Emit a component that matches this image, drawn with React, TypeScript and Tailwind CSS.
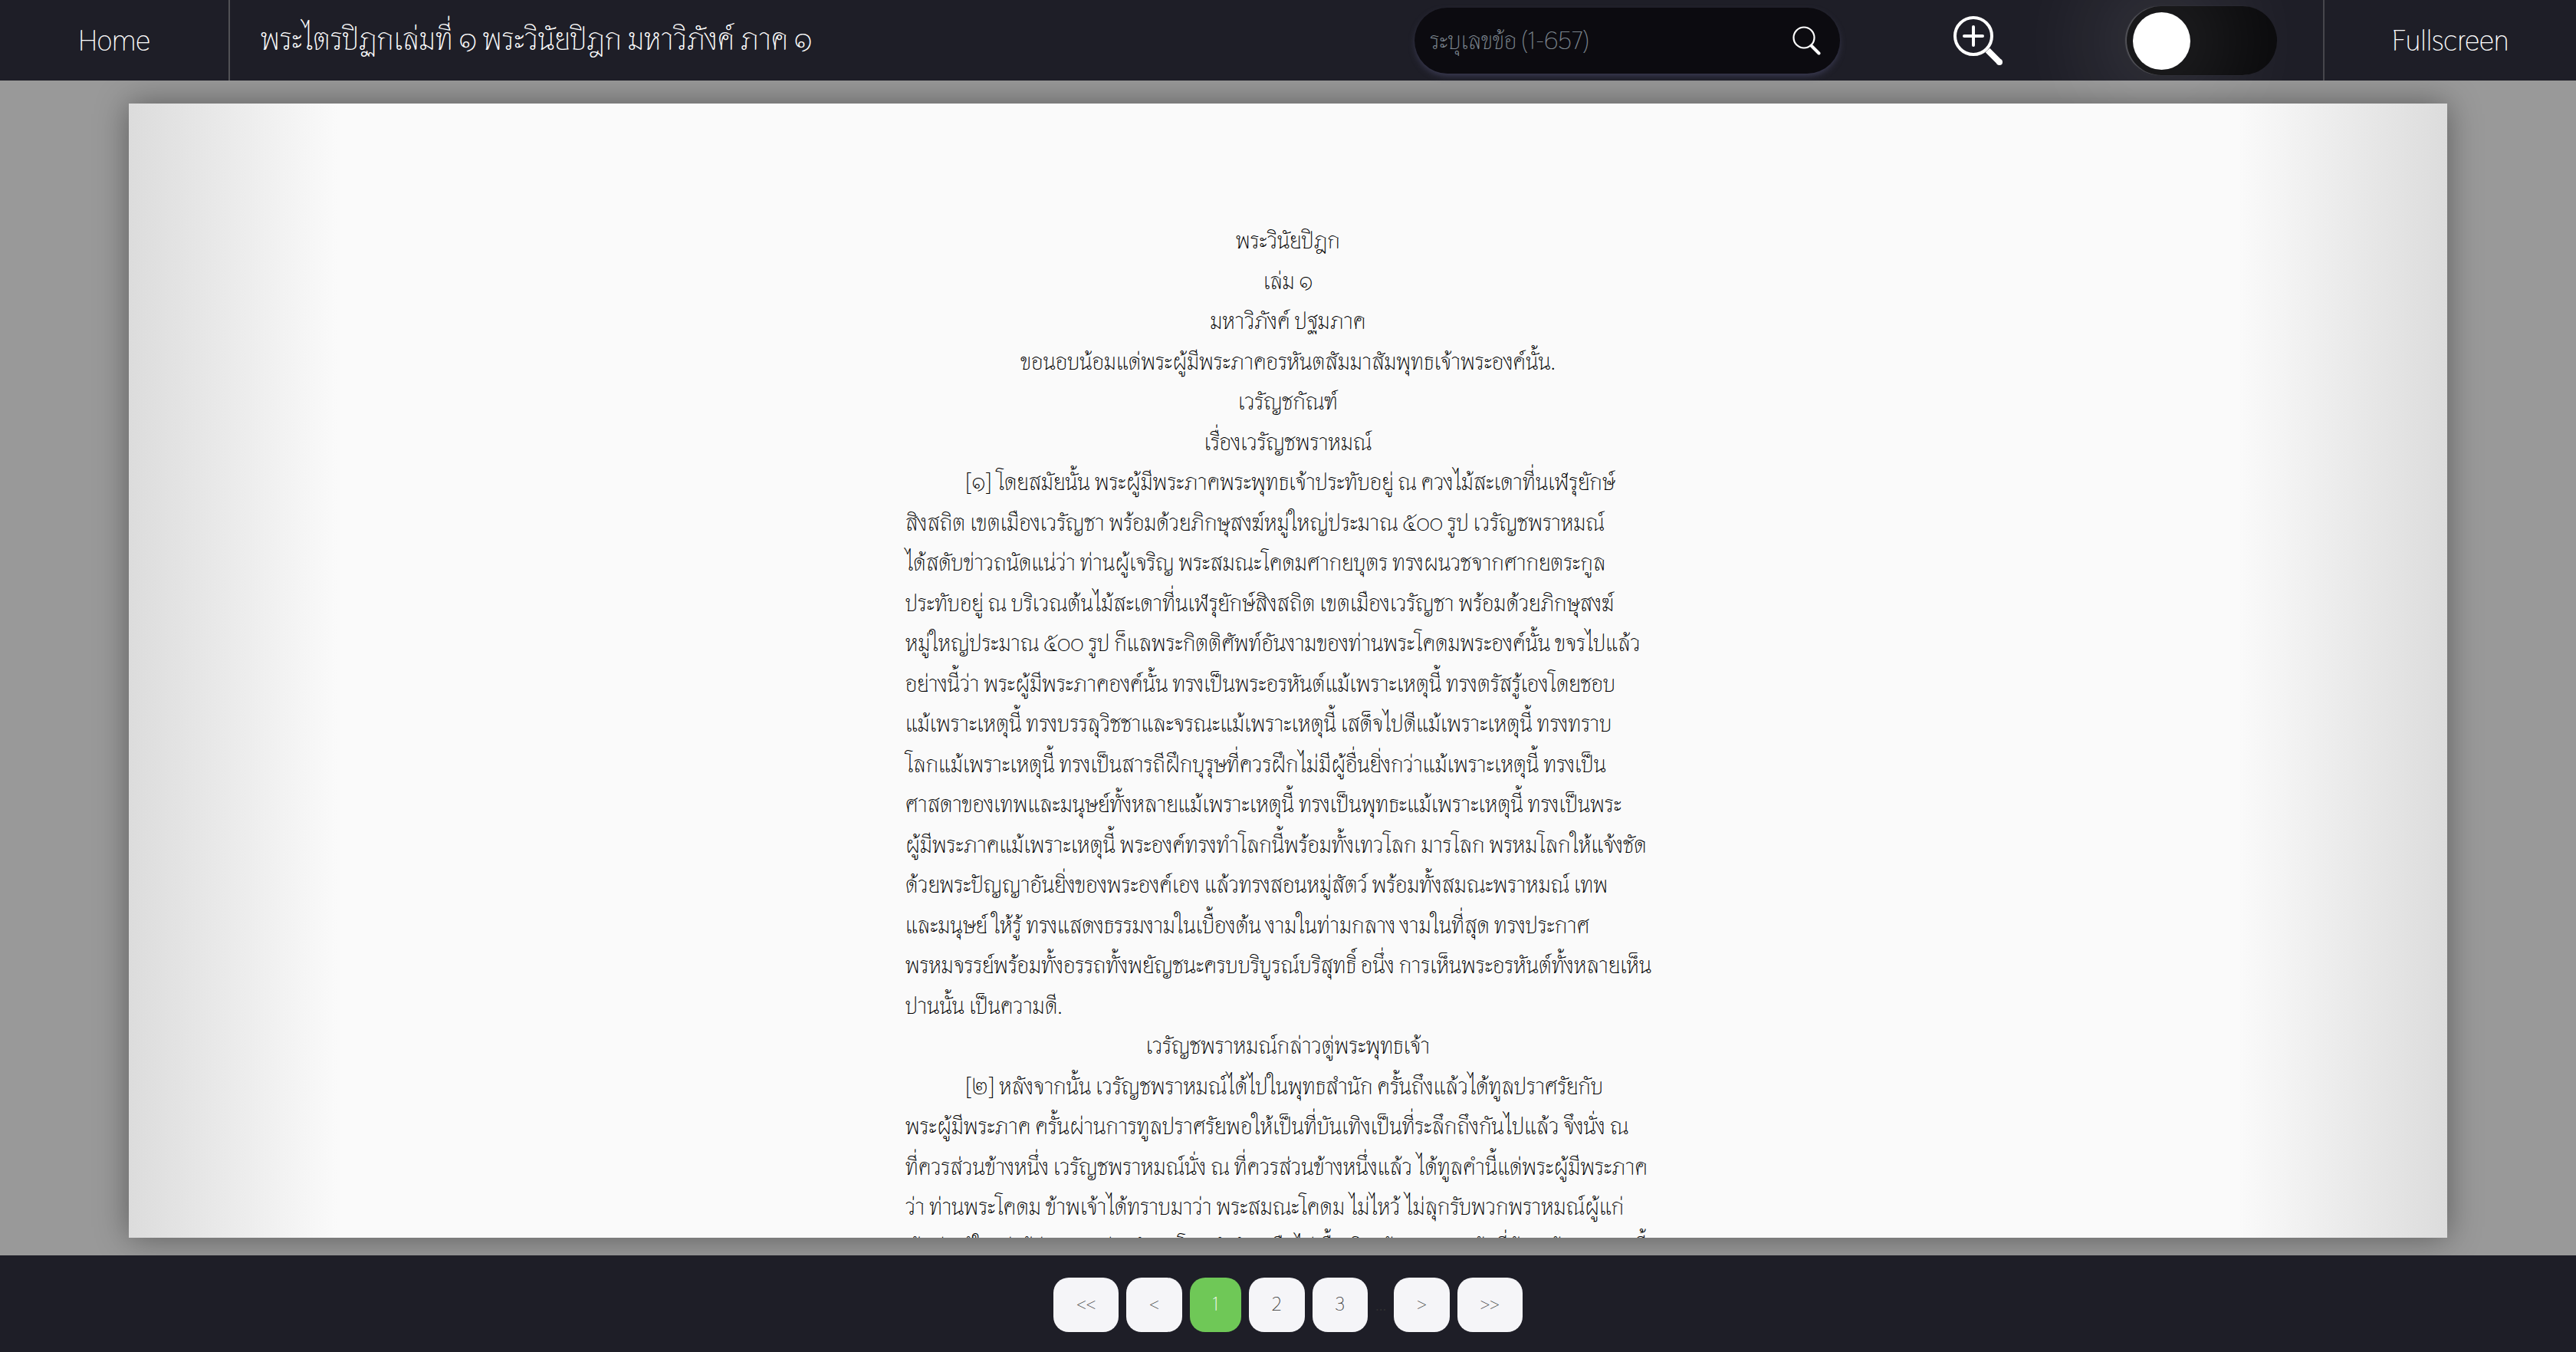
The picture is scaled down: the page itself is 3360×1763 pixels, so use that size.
type Section = { kind: 'heading' | 'paragraph'; lines: string[] };

const sections: Section[] = [
  {
    kind: 'heading',
    lines: [
      'พระวินัยปิฎก',
      'เล่ม ๑',
      'มหาวิภังค์ ปฐมภาค',
      'ขอนอบน้อมแด่พระผู้มีพระภาคอรหันตสัมมาสัมพุทธเจ้าพระองค์นั้น.',
      'เวรัญชกัณฑ์',
      'เรื่องเวรัญชพราหมณ์',
    ],
  },
  {
    kind: 'paragraph',
    lines: [
      '[๑] โดยสมัยนั้น พระผู้มีพระภาคพระพุทธเจ้าประทับอยู่ ณ ควงไม้สะเดาที่นเฬรุยักษ์',
      'สิงสถิต เขตเมืองเวรัญชา พร้อมด้วยภิกษุสงฆ์หมู่ใหญ่ประมาณ ๕๐๐ รูป เวรัญชพราหมณ์',
      'ได้สดับข่าวถนัดแน่ว่า ท่านผู้เจริญ พระสมณะโคดมศากยบุตร ทรงผนวชจากศากยตระกูล',
      'ประทับอยู่ ณ บริเวณต้นไม้สะเดาที่นเฬรุยักษ์สิงสถิต เขตเมืองเวรัญชา พร้อมด้วยภิกษุสงฆ์',
      'หมู่ใหญ่ประมาณ ๕๐๐ รูป ก็แลพระกิตติศัพท์อันงามของท่านพระโคดมพระองค์นั้น ขจรไปแล้ว',
      'อย่างนี้ว่า พระผู้มีพระภาคองค์นั้น ทรงเป็นพระอรหันต์แม้เพราะเหตุนี้ ทรงตรัสรู้เองโดยชอบ',
      'แม้เพราะเหตุนี้ ทรงบรรลุวิชชาและจรณะแม้เพราะเหตุนี้ เสด็จไปดีแม้เพราะเหตุนี้ ทรงทราบ',
      'โลกแม้เพราะเหตุนี้ ทรงเป็นสารถีฝึกบุรุษที่ควรฝึกไม่มีผู้อื่นยิ่งกว่าแม้เพราะเหตุนี้ ทรงเป็น',
      'ศาสดาของเทพและมนุษย์ทั้งหลายแม้เพราะเหตุนี้ ทรงเป็นพุทธะแม้เพราะเหตุนี้ ทรงเป็นพระ',
      'ผู้มีพระภาคแม้เพราะเหตุนี้ พระองค์ทรงทำโลกนี้พร้อมทั้งเทวโลก มารโลก พรหมโลกให้แจ้งชัด',
      'ด้วยพระปัญญาอันยิ่งของพระองค์เอง แล้วทรงสอนหมู่สัตว์ พร้อมทั้งสมณะพราหมณ์ เทพ',
      'และมนุษย์ ให้รู้ ทรงแสดงธรรมงามในเบื้องต้น งามในท่ามกลาง งามในที่สุด ทรงประกาศ',
      'พรหมจรรย์พร้อมทั้งอรรถทั้งพยัญชนะครบบริบูรณ์บริสุทธิ์ อนึ่ง การเห็นพระอรหันต์ทั้งหลายเห็น',
      'ปานนั้น เป็นความดี.',
    ],
  },
  { kind: 'heading', lines: ['เวรัญชพราหมณ์กล่าวตู่พระพุทธเจ้า'] },
  {
    kind: 'paragraph',
    lines: [
      '[๒] หลังจากนั้น เวรัญชพราหมณ์ได้ไปในพุทธสำนัก ครั้นถึงแล้วได้ทูลปราศรัยกับ',
      'พระผู้มีพระภาค ครั้นผ่านการทูลปราศรัยพอให้เป็นที่บันเทิงเป็นที่ระลึกถึงกันไปแล้ว จึงนั่ง ณ',
      'ที่ควรส่วนข้างหนึ่ง เวรัญชพราหมณ์นั่ง ณ ที่ควรส่วนข้างหนึ่งแล้ว ได้ทูลคำนี้แด่พระผู้มีพระภาค',
      'ว่า ท่านพระโคดม ข้าพเจ้าได้ทราบมาว่า พระสมณะโคดม ไม่ไหว้ ไม่ลุกรับพวกพราหมณ์ผู้แก่',
      'ผู้เฒ่า ผู้ใหญ่ ผู้ล่วงกาลผ่านวัยมาโดยลำดับ หรือไม่เชื้อเชิญด้วยอาสนะ ข้อที่ข้าพเจ้าทราบมานี้',
    ],
  },
];

const pages = ['<<', '<', '1', '2', '3', '...', '>', '>>'];

function SearchIcon() {
  return (
    <svg viewBox="0 0 38 38" className="size-[38px]" fill="none" stroke="white" aria-hidden="true">
      <circle cx="15" cy="15" r="13.500" strokeWidth="2.200" />
      <path d="M24.500 25.500L34.500 35.500" strokeWidth="4" strokeLinecap="round" />
    </svg>
  );
}

function ZoomInIcon() {
  return (
    <svg viewBox="0 0 64 64" className="size-16" fill="none" stroke="white" strokeLinecap="round" aria-hidden="true">
      <circle cx="26" cy="26" r="24" strokeWidth="4" />
      <path d="M26 14v24M14 26h24" strokeWidth="4" />
      <path d="M44.500 44.500L60 60" strokeWidth="8" strokeLinecap="butt" />
      <circle cx="60" cy="60" r="4" fill="white" stroke="none" />
    </svg>
  );
}

function Header() {
  return (
    <header className="relative z-10 flex h-[105px] shrink-0 items-stretch bg-[#1e1e27] text-white">
      <a href="#home" className="flex w-[300px] items-center justify-center border-r-2 border-[#515155] text-[38px]">
        Home
      </a>
      <h1 className="flex items-center pb-1 pl-10 text-[40px] whitespace-nowrap">
        พระไตรปิฏกเล่มที่ ๑ พระวินัยปิฎก มหาวิภังค์ ภาค ๑
      </h1>
      <form className="my-[10px] ml-auto flex h-[86px] w-[555px] items-center rounded-full bg-[#0c0b10] pr-[24px] pl-5 shadow-[0_4px_10px_-2px_#41415c]">
        <input
          type="text"
          aria-label="ระบุเลขข้อ"
          placeholder="ระบุเลขข้อ (1-657)"
          className="min-w-0 flex-1 bg-transparent text-[32px] outline-none placeholder:text-[#7c868f]"
        />
        <button type="button" aria-label="ค้นหา">
          <SearchIcon />
        </button>
      </form>
      <button type="button" aria-label="ขยายตัวอักษร" className="ml-[148px]">
        <ZoomInIcon />
      </button>
      <label className="relative mt-2 ml-[162px] h-[90px] w-[196px] rounded-full bg-[#0a0a0c] shadow-[-2px_0_1px_#48484e]">
        <input type="checkbox" role="switch" aria-label="โหมดกลางคืน" className="peer absolute inset-0 size-full opacity-0" />
        <span className="absolute top-2 left-2 size-[75px] rounded-full bg-white shadow-[0_0_120px_60px_rgba(255,255,255,0.09)] peer-checked:left-[113px]" />
      </label>
      <button
        type="button"
        className="ml-[60px] w-[330px] border-l-2 border-[#46464c] text-center text-[38px]"
      >
        Fullscreen
      </button>
    </header>
  );
}

function Reader() {
  return (
    <main className="flex min-h-0 flex-1 justify-center bg-[#999] pt-[30px] pb-[23px]">
      <article className="w-[90%] overflow-hidden bg-[linear-gradient(to_right,#dcdcdc,#fafafa_9%,#fafafa_91%,#dcdcdc)] pt-[153px] text-[30px] leading-[1.75] text-black shadow-[0_0_40px_rgba(0,0,0,0.4)]">
        <div className="mx-auto w-[998px]">
          {sections.map((section, i) =>
            section.kind === 'heading' ? (
              <div key={i} className="text-center">
                {section.lines.map((line) => (
                  <h2 key={line}>{line}</h2>
                ))}
              </div>
            ) : (
              <p key={i} className="indent-[78px] whitespace-pre">
                {section.lines.join('\n')}
              </p>
            ),
          )}
        </div>
      </article>
    </main>
  );
}

function Pagination() {
  return (
    <nav aria-label="หน้า" className="flex h-[126px] shrink-0 items-center justify-center gap-[10px] bg-[#1e1e27] pt-0.5 text-[24px] text-[#333]">
      {pages.map((page) =>
        page === '...' ? (
          <span key={page}>...</span>
        ) : (
          <button
            key={page}
            type="button"
            aria-current={page === '1' ? 'page' : undefined}
            className={
              page === '1'
                ? 'h-[71px] rounded-[20px] bg-[#6fc857] px-[30px] text-white'
                : 'h-[71px] rounded-[20px] bg-[#f5f5f8] px-[30px]'
            }
          >
            {page}
          </button>
        ),
      )}
    </nav>
  );
}

export default function App() {
  return (
    <div className="flex h-screen flex-col font-[Thasadith,'Noto_Sans_Thai','Noto_Sans',sans-serif]">
      <Header />
      <Reader />
      <Pagination />
    </div>
  );
}
